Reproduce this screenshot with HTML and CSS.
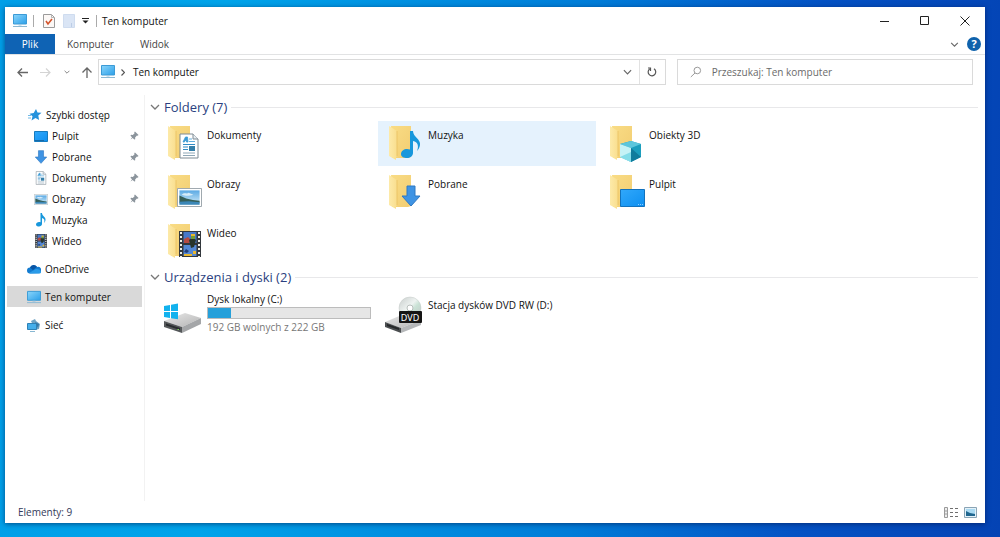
FILE: index.html
```html
<!DOCTYPE html>
<html lang="pl">
<head>
<meta charset="utf-8">
<title>Ten komputer</title>
<link rel="stylesheet" href="styles.css">
</head>
<body class="desktop">
<svg class="defs" width="0" height="0" aria-hidden="true">
  <defs>
    <linearGradient id="gScreen" x1="0" y1="0" x2="1" y2="1"><stop offset="0" stop-color="#8bd6fb"/><stop offset="1" stop-color="#2b9fe9"/></linearGradient>
    <linearGradient id="gFront" x1="0" y1="0" x2="1" y2="0"><stop offset="0" stop-color="#fdeaa9"/><stop offset="1" stop-color="#f9de8e"/></linearGradient>
    <linearGradient id="gBack" x1="0" y1="0" x2="1" y2="1"><stop offset="0" stop-color="#f9dc85"/><stop offset="1" stop-color="#f2cd72"/></linearGradient>
    <linearGradient id="gDesk" x1="0" y1="0" x2="1" y2="1"><stop offset="0" stop-color="#31a8fb"/><stop offset="1" stop-color="#0d8ff0"/></linearGradient>
    <linearGradient id="gDrive" x1="0" y1="0" x2="1" y2="1"><stop offset="0" stop-color="#e9e9e9"/><stop offset="1" stop-color="#b4b4b4"/></linearGradient>
    <linearGradient id="gSky" x1="0" y1="0" x2="0" y2="1"><stop offset="0" stop-color="#5aa9e4"/><stop offset="1" stop-color="#d4edf8"/></linearGradient>
    <linearGradient id="gDisc" x1="0" y1="0" x2="1" y2="1"><stop offset="0" stop-color="#c8cdcc"/><stop offset=".45" stop-color="#eef3f1"/><stop offset=".6" stop-color="#c9e2d5"/><stop offset="1" stop-color="#c2c4c6"/></linearGradient>
    <symbol id="pc" viewBox="0 0 16 16"><path d="M1.500 1.500h13v9.500h-13z" fill="url(#gScreen)" stroke="#3c9bd6"/><path d="M6.500 11.500h3v1h-3z" fill="#9fc4dc"/><path d="M1 13.500h14" stroke="#8db9d3"/></symbol>
    <symbol id="folder" viewBox="0 0 24 36"><path d="M2 1h20v31l-3 1H3z" fill="url(#gBack)"/><path d="M0 1l8 5v25l-1 1v3l-7-4z" fill="url(#gFront)"/><path d="M8 6v25" stroke="#e6bd5c" stroke-width=".7"/></symbol>
    <symbol id="note" viewBox="0 0 20 28"><path d="M9 0h3c0 6 8 8 7 14c-.4 3-2 5-3 6c2-5 1-9-4-10v12c0 3-3 5-6 5s-6-1-6-4 3-5 6-5c1 0 2 .2 3 .6z" fill="#1797dc"/></symbol>
    <symbol id="down" viewBox="0 0 20 22"><path d="M6 1h8v10h5l-9 10-9-10h5z" fill="#3f94e4" stroke="#2f78c2"/></symbol>
    <symbol id="doc" viewBox="0 0 20 26"><path d="M1 1h13l5 5v19H1z" fill="#fff" stroke="#7e8b94"/><path d="M14 1v5h5" fill="#e8eef2" stroke="#7e8b94"/><path d="M4 9l2.500-5h2L9 9H7.500V7.500H6L5.500 9zM10 6h3M10 8.500h6" fill="#3a9ad4" stroke="#3a9ad4" stroke-width=".8"/><path d="M4 11.500h12M4 14h5M4 16.500h5" stroke="#318bc5"/><path d="M10 13h6v5h-6z" fill="#357fa9"/><path d="M4 20h12M4 22.500h12" stroke="#8fa7b6"/></symbol>
    <symbol id="photo" viewBox="0 0 26 20" preserveAspectRatio="none"><path d="M.5.500h25v19H.5z" fill="#fff" stroke="#9aa4aa"/><path d="M2.500 2.500h21v15h-21z" fill="url(#gSky)"/><path d="M2.500 8l7 3 7 1.500 7 1v2h-21z" fill="#355f59"/><path d="M2.500 14.500l10-.5 11 1v2.500h-21z" fill="#3c87b7"/><path d="M5 7c3-3 5 0 7-2l5 2c-4 1-7 2-12 0z" fill="#eef8fc" opacity=".8"/></symbol>
    <symbol id="film" viewBox="0 0 22 26"><path d="M0 0h22v26H0z" fill="#33383d"/><path d="M4.500 1h13v11h-13z" fill="#4778c8"/><path d="M4.500 14h13v11h-13z" fill="#5488d4"/><path d="M2 1v25M20 1v25" stroke="#f0f0e8" stroke-width="2" stroke-dasharray="2 2"/><path d="M12 3h4v3h-4zM14 20h3v3h-3zM5 23h8v2H5z" fill="#e8b72e"/><path d="M5 8l4-2 3 3-2 3H5z" fill="#b64b42"/><path d="M10 9l4-3 3 3-2 7-3 1z" fill="#28352b"/><path d="M12 5h4v3h-4z" fill="#759b37"/><path d="M7 18l3 2-2 2-3-1z" fill="#223f7c"/></symbol>
    <symbol id="pin" viewBox="0 0 10 10"><path d="M5.500.500l4 4-1 .8-.8-.2-2 2 .1 2-1 .4L3 7.700.6 9.400 2.300 7 .5 5.200l.7-.9 1.900.1 2-2-.4-1z" fill="#8b949c"/></symbol>
    <symbol id="chev" viewBox="0 0 10 6"><path d="M1 1l4 4 4-4" fill="none" stroke="currentColor" stroke-width="1.300"/></symbol>
  </defs>
</svg>

<main class="window">
  <header class="titlebar">
    <svg class="i16" aria-hidden="true"><use href="#pc"/></svg>
    <span class="sep"></span>
    <button class="quick" aria-label="Właściwości"><svg width="12" height="14" viewBox="0 0 12 14"><path d="M.5.500h8l3 3v10H.5z" fill="#fcf8f6" stroke="#9b9b9b"/><path d="M8.500.500v3h3" fill="none" stroke="#b5b5b5"/><path d="M3 7l2 3 4-5" fill="none" stroke="#d3542c" stroke-width="1.600"/></svg></button>
    <button class="quick" aria-label="Nowy folder"><svg width="12" height="14" viewBox="0 0 12 14"><path d="M.5.500h11v13H.5z" fill="#dae5f5" stroke="#cfdcef"/><path d="M8.500 9v4" stroke="#bccde6"/></svg></button>
    <button class="quick small" aria-label="Dostosuj pasek"><svg width="7" height="6" viewBox="0 0 7 6"><path d="M0 .5h7" stroke="#222"/><path d="M.5 2.500h6l-3 3z" fill="#222"/></svg></button>
    <span class="sep"></span>
    <h1 class="title">Ten komputer</h1>
    <div class="controls">
      <button aria-label="Minimalizuj"><svg width="10" height="10"><path d="M0 5.500h9" stroke="#222"/></svg></button>
      <button aria-label="Maksymalizuj"><svg width="10" height="10"><path d="M.5.500h8v8h-8z" fill="none" stroke="#222"/></svg></button>
      <button aria-label="Zamknij"><svg width="10" height="10"><path d="M.5.500l9 9M9.500.500l-9 9" stroke="#222"/></svg></button>
    </div>
  </header>

  <div class="ribbon">
    <button class="tab file">Plik</button>
    <button class="tab">Komputer</button>
    <button class="tab">Widok</button>
    <div class="ribbon-end">
      <button class="plain light" aria-label="Rozwiń wstążkę"><svg width="9" height="5"><use href="#chev"/></svg></button>
      <button class="help" aria-label="Pomoc">?</button>
    </div>
  </div>

  <div class="navbar">
    <div class="history">
      <button class="plain" aria-label="Wstecz"><svg width="11" height="9" viewBox="0 0 11 9"><path d="M11 4.500H1M5 .5l-4 4 4 4" fill="none" stroke="#666" stroke-width="1.300"/></svg></button>
      <button class="plain" aria-label="Dalej"><svg width="11" height="9" viewBox="0 0 11 9"><path d="M0 4.500h10M6 .5l4 4-4 4" fill="none" stroke="#d4d4d4" stroke-width="1.200"/></svg></button>
      <button class="plain" aria-label="Ostatnie lokalizacje"><svg width="6" height="4"><use href="#chev"/></svg></button>
      <button class="plain" aria-label="W górę"><svg width="10" height="11" viewBox="0 0 10 11"><path d="M5 11V1M.5 5.500L5 1l4.500 4.500" fill="none" stroke="#666" stroke-width="1.300"/></svg></button>
    </div>
    <div class="address">
      <svg class="i16" aria-hidden="true"><use href="#pc"/></svg>
      <svg class="crumb" width="4" height="7" viewBox="0 0 4 7" aria-hidden="true"><path d="M.5.500l3 3-3 3" fill="none" stroke="#555" stroke-width="1.200"/></svg>
      <span class="path">Ten komputer</span>
      <button class="plain" aria-label="Poprzednie lokalizacje"><svg width="9" height="6"><use href="#chev"/></svg></button>
      <button class="refresh" aria-label="Odśwież"><svg width="10" height="10" viewBox="0 0 10 10"><path d="M7 1.800A3.800 3.800 0 1 1 2.600 2M1 1h2.500v3" fill="none" stroke="#555" stroke-width="1.200"/></svg></button>
    </div>
    <label class="search">
      <svg width="12" height="12" viewBox="0 0 12 12" aria-hidden="true"><circle cx="7.300" cy="4.500" r="3.300" fill="none" stroke="#999"/><path d="M5 7L.8 11" stroke="#999"/></svg>
      <input type="search" placeholder="Przeszukaj: Ten komputer" aria-label="Przeszukaj: Ten komputer">
    </label>
  </div>

  <div class="body">
    <nav class="sidebar">
      <a href="#" class="row"><svg class="i14" viewBox="0 0 14 14" aria-hidden="true"><path d="M8 1l1.500 3.500 4 .2-3.200 2.800.8 4.500L7.500 10 3.500 12.500l1-4.300-3-2.500 4.200-.7z" fill="#2592dc"/><path d="M0 7.500h3M0 10h3" stroke="#70b9e6"/></svg>Szybki dostęp</a>
      <a href="#" class="row sub"><svg class="i14" viewBox="0 0 14 14" aria-hidden="true"><path d="M.5 2.500h13v10H.5z" fill="url(#gDesk)" stroke="#167bbf"/><path d="M1 11.500h9" stroke="#1769a5"/></svg>Pulpit<svg class="pin"><use href="#pin"/></svg></a>
      <a href="#" class="row sub"><svg class="i14" aria-hidden="true"><use href="#down"/></svg>Pobrane<svg class="pin"><use href="#pin"/></svg></a>
      <a href="#" class="row sub"><svg class="i14" aria-hidden="true"><use href="#doc"/></svg>Dokumenty<svg class="pin"><use href="#pin"/></svg></a>
      <a href="#" class="row sub"><svg class="i14" viewBox="0 0 14 14" aria-hidden="true"><use href="#photo" y="2" width="14" height="11"/></svg>Obrazy<svg class="pin"><use href="#pin"/></svg></a>
      <a href="#" class="row sub"><svg class="i14" aria-hidden="true"><use href="#note"/></svg>Muzyka</a>
      <a href="#" class="row sub"><svg class="i14" aria-hidden="true"><use href="#film"/></svg>Wideo</a>
      <a href="#" class="row root"><svg class="i14" viewBox="0 0 14 14" aria-hidden="true"><path d="M3 11.500a3 3 0 0 1 0-6 4 4 0 0 1 7-.5 3.300 3.300 0 0 1 2 6.300z" fill="#137bd0"/><path d="M3 5.500a4 4 0 0 1 7-.7L6 8z" fill="#0a55a5"/><path d="M2 11l7-4c3 0 5 1 5 3 0 1-1 1.500-2 1.500H3z" fill="#2a9be8"/></svg>OneDrive</a>
      <a href="#" class="row root selected" aria-current="page"><svg class="i14" viewBox="1 0 14 15" preserveAspectRatio="none" aria-hidden="true"><use href="#pc" width="16" height="16"/></svg>Ten komputer</a>
      <a href="#" class="row root"><svg class="i14" viewBox="0 0 14 14" aria-hidden="true"><path d="M4 3l4-2 1 2 4 3-1 5-4 1z" fill="#6fa3c4"/><path d="M.5 5.500h9v6h-9z" fill="#45aeea" stroke="#2e81b6"/><path d="M3 13.500h5" stroke="#88b7d2"/><path d="M8 4l4 2-1 4" fill="#3478a8"/></svg>Sieć</a>
    </nav>

    <div class="content">
      <section class="group">
        <h2 class="heading"><svg width="10" height="6" aria-hidden="true"><use href="#chev"/></svg>Foldery (7)</h2>
        <div class="tiles">
          <a href="#" class="tile"><svg class="art" viewBox="0 0 40 44" aria-hidden="true"><use href="#folder" x="5" y="4" width="24" height="36"/><use href="#doc" x="16" y="12" width="20" height="26"/></svg><span class="name">Dokumenty</span></a>
          <a href="#" class="tile hover"><svg class="art" viewBox="0 0 40 44" aria-hidden="true"><use href="#folder" x="5" y="4" width="24" height="36"/><use href="#note" x="17" y="10" width="20" height="28"/></svg><span class="name">Muzyka</span></a>
          <a href="#" class="tile"><svg class="art" viewBox="0 0 40 44" aria-hidden="true"><use href="#folder" x="5" y="4" width="24" height="36"/><path d="M15 23l11-3 10 3v13l-10 5-11-5z" fill="#1c9ebd"/><path d="M15 23l11-3 10 3-10 4z" fill="#5cc6dc"/><path d="M15 23l11 4v14l-11-5z" fill="#c5f2f6"/><path d="M26 27v14l10-5z" fill="#117c9c"/><path d="M15 36l11-5v10z" fill="#84dde9"/></svg><span class="name">Obiekty 3D</span></a>
          <a href="#" class="tile"><svg class="art" viewBox="0 0 40 44" aria-hidden="true"><use href="#folder" x="5" y="4" width="24" height="36"/><use href="#photo" x="14" y="18" width="25" height="19"/></svg><span class="name">Obrazy</span></a>
          <a href="#" class="tile"><svg class="art" viewBox="0 0 40 44" aria-hidden="true"><use href="#folder" x="5" y="4" width="24" height="36"/><use href="#down" x="17" y="15" width="20" height="22"/></svg><span class="name">Pobrane</span></a>
          <a href="#" class="tile"><svg class="art" viewBox="0 0 40 44" aria-hidden="true"><use href="#folder" x="5" y="4" width="24" height="36"/><path d="M15.500 19.500h24v17h-24z" fill="url(#gDesk)" stroke="#1272bd"/><path d="M33 34.500h5" stroke="#8dccff" stroke-dasharray="1 1"/></svg><span class="name">Pulpit</span></a>
          <a href="#" class="tile"><svg class="art" viewBox="0 0 40 44" aria-hidden="true"><use href="#folder" x="5" y="4" width="24" height="36"/><use href="#film" x="16" y="12" width="22" height="26"/></svg><span class="name">Wideo</span></a>
        </div>
      </section>

      <section class="group">
        <h2 class="heading"><svg width="10" height="6" aria-hidden="true"><use href="#chev"/></svg>Urządzenia i dyski (2)</h2>
        <div class="tiles">
          <a href="#" class="tile drive"><svg class="art" viewBox="0 0 40 44" aria-hidden="true"><path d="M1 30l21-8 16 5-19 9z" fill="url(#gDrive)"/><path d="M1 30l18 6v6L1 36z" fill="#55585a"/><path d="M3 32.500l14 4.500v2L3 34.500z" fill="#292c2e"/><path d="M19 36l19-9v6l-19 9z" fill="#a4a6a8"/><path d="M14.500 38.500h1.500" stroke="#7fd45b"/><path d="M1 15l6-1v6H1zM8 13.800l7-1.300V20H8zM1 21h6v6l-6-1zM8 21h7v7.300L8 27.200z" fill="#12b2ee"/></svg><span class="details"><span class="line">Dysk lokalny (C:)</span><span class="bar" role="img" aria-label="Zajęte miejsce"><span class="used" style="width:14%"></span></span><span class="line muted">192 GB wolnych z 222 GB</span></span></a>
          <a href="#" class="tile"><svg class="art" viewBox="0 0 40 44" aria-hidden="true"><path d="M1 31l19-8 17 6-20 8z" fill="url(#gDrive)"/><path d="M1 31l16 6v5L1 36z" fill="#4b4e50"/><path d="M3 33l12 4v2L3 35z" fill="#252729"/><path d="M17 37l20-8v5l-20 8z" fill="#b5b7b9"/><circle cx="26" cy="17" r="11" fill="url(#gDisc)" stroke="#c3c8c7" stroke-width=".5"/><circle cx="26" cy="17" r="3" fill="#fff" stroke="#b9bfbd"/><rect x="15" y="20" width="23" height="12" rx="1" fill="#151515"/><text x="26" y="30" class="disc-label">DVD</text></svg><span class="name">Stacja dysków DVD RW (D:)</span></a>
        </div>
      </section>
    </div>
  </div>

  <footer class="status">
    <span>Elementy: 9</span>
    <div class="views">
      <button class="plain" aria-label="Szczegóły"><svg width="14" height="11" viewBox="0 0 14 11"><path d="M.5.500h3v10h-3zM.5 4h3M.5 7h3" fill="#eee" stroke="#9a9a9a"/><path d="M6 1.500h3M11 1.500h3M6 5.500h3M11 5.500h3M6 9.500h3M11 9.500h3" stroke="#6e6e6e"/></svg></button>
      <button class="plain" aria-label="Duże ikony"><svg width="13" height="11" viewBox="0 0 13 11"><path d="M.5.500h12v10H.5z" fill="#e3f1f9" stroke="#8aa4b5"/><path d="M2 2h9v7H2z" fill="#a9daf3"/><path d="M2 4l4 2 5 1v2H2z" fill="#1f668f"/></svg></button>
    </div>
  </footer>
</main>
</body>
</html>
```
FILE: styles.css
```css
* { box-sizing: border-box; }

.desktop {
  margin: 0;
  min-height: 100vh;
  padding: 7px 15px 14px 5px;
  display: flex;
  background: linear-gradient(93deg, #009fe8 0%, #00a4ea 22%, #007cd8 58%, #0452c4 80%, #0443b4 100%);
  font: 10px/14px "Open Sans", "Noto Sans", sans-serif;
  color: #111;
}

.defs { position: absolute; }

.window {
  flex: 1;
  min-width: 0;
  display: flex;
  flex-direction: column;
  background: #fff;
  box-shadow: 0 1px 5px rgba(0, 20, 70, .6);
}

button {
  border: 0;
  padding: 0;
  background: none;
  font: inherit;
  color: inherit;
  display: flex;
  align-items: center;
  justify-content: center;
}

a { color: inherit; text-decoration: none; }
svg { flex: none; }

.i16 { width: 16px; height: 16px; }
.i14 { width: 14px; height: 14px; }

.titlebar {
  height: 27px;
  padding-left: 7px;
  display: flex;
  align-items: center;
}
.sep { width: 1px; height: 12px; background: #aaa; margin: 0 5px; }
.quick { width: 20px; height: 20px; }
.quick.small { width: 12px; }
.title { margin: 0; font-size: 10px; font-weight: 400; }
.controls { margin-left: auto; display: flex; }
.controls button { width: 40px; height: 26px; }

.ribbon {
  display: flex;
  height: 21px;
  border-bottom: 1px solid #e2e3e4;
  color: #444;
}
.tab { padding: 0 13px; height: 20px; }
.tab.file { width: 50px; margin-right: -1px; background: #0f63b4; color: #fff; }
.ribbon-end { margin-left: auto; display: flex; align-items: center; gap: 8px; padding-right: 4px; }
.light { color: #999; }
.help {
  width: 14px;
  height: 14px;
  border-radius: 50%;
  background: #0f62ac;
  color: #fff;
  font-size: 11px;
  font-weight: 700;
}

.navbar {
  display: flex;
  padding: 4px 12px 5px;
}
.history { width: 81px; display: flex; align-items: center; justify-content: space-between; padding-right: 6px; }
.plain { color: #666; }
.address {
  flex: 1;
  height: 26px;
  display: flex;
  align-items: center;
  border: 1px solid #dadada;
  padding-left: 1px;
}
.crumb { margin: 0 8px 0 5px; }
.path { flex: 1; }
.refresh { width: 26px; height: 24px; margin-left: 7px; border-left: 1px solid #e2e2e2; }
.search {
  width: 31%;
  margin-left: 11px;
  height: 26px;
  display: flex;
  align-items: center;
  gap: 10px;
  padding-left: 12px;
  border: 1px solid #dadada;
}
.search input {
  flex: 1;
  min-width: 0;
  border: 0;
  padding: 0;
  outline: 0;
  background: none;
  font: inherit;
}
.search input::placeholder { color: #6a6a6a; opacity: 1; }

.body { flex: 1; display: flex; padding-top: 5px; }

.sidebar {
  width: 140px;
  padding: 9px 2px 0 2px;
  border-right: 1px solid #f2f2f2;
}
.row {
  display: flex;
  align-items: center;
  height: 21px;
  gap: 4px;
  padding: 0 3px 0 20px;
}
.row.root { margin-top: 7px; }
.row:first-child { padding-left: 21px; }
.row.sub { padding-left: 27px; }
.selected { background: #d9d9d9; }
.pin { width: 9px; height: 9px; margin-left: auto; }

.content { flex: 1; min-width: 0; padding: 2px 7px 0 5px; }
.heading {
  display: flex;
  align-items: center;
  gap: 4px;
  height: 20px;
  margin: 0;
  font-size: 13px;
  line-height: 20px;
  font-weight: 400;
  color: #2b3f80;
}
.heading svg { color: #777; }
.heading::after { content: ""; flex: 1; height: 1px; background: #e8e8ea; }
.tiles {
  display: grid;
  grid-template-columns: repeat(auto-fill, 218px);
  gap: 4px 3px;
  padding: 4px 0 3px 7px;
}
.tile { display: flex; height: 45px; padding-left: 6px; gap: 4px; }
.tile.hover { background: #e5f2fd; }
.art { width: 40px; height: 44px; }
.name { padding-top: 7px; }
.details { flex: 1; padding-right: 4px; }
.line { display: block; line-height: 16px; }
.muted { color: #777; }
.bar { display: block; height: 12px; border: 1px solid #bcbcbc; background: #e6e6e6; }
.used { display: block; height: 100%; background: #26a0da; }
.disc-label { font: 9px "Noto Sans", sans-serif; fill: #fff; text-anchor: middle; }

.status {
  display: flex;
  align-items: center;
  justify-content: space-between;
  height: 22px;
  padding: 0 8px 0 13px;
  color: #333a5a;
}
.views { display: flex; gap: 6px; }
```
